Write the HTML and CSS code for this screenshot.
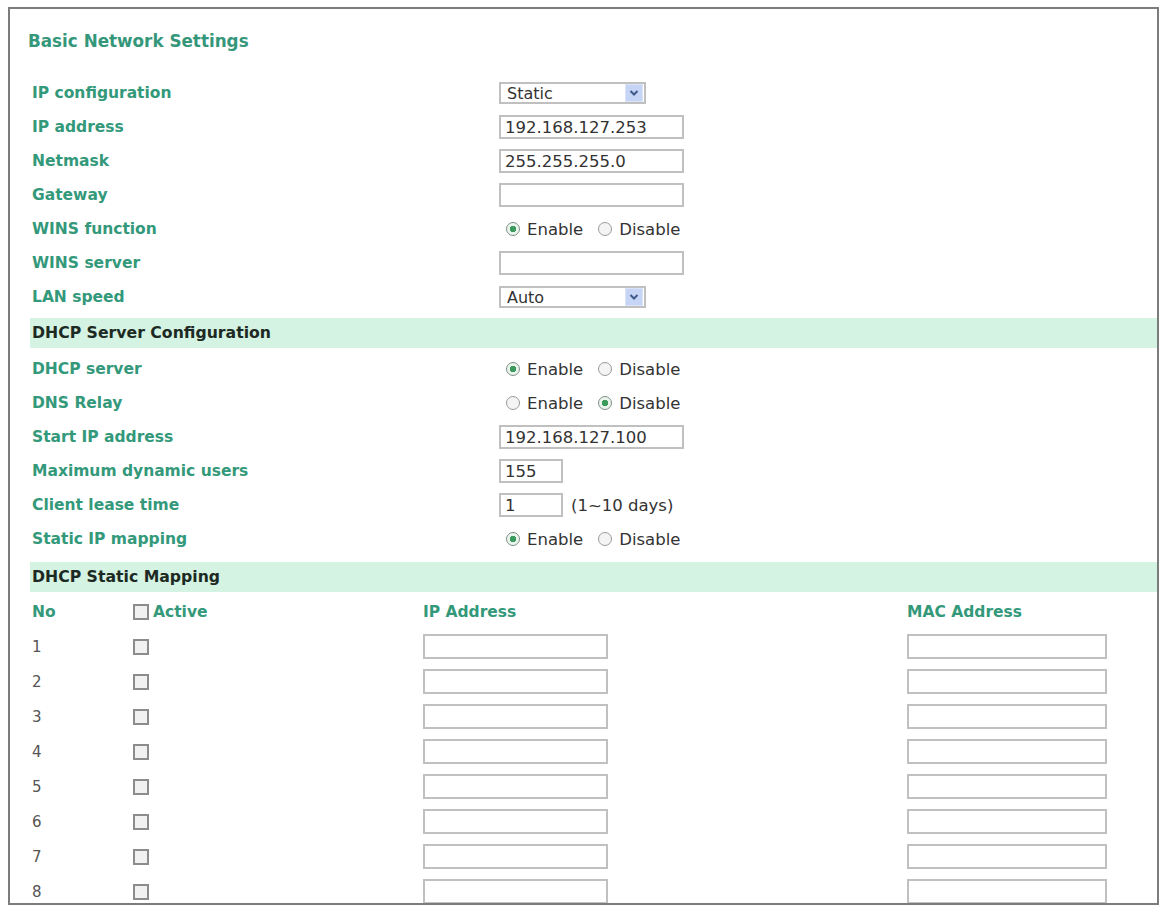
FILE: index.html
```html
<!DOCTYPE html>
<html lang="en">
<head>
    <meta charset="UTF-8">
    <title>Basic Network Settings</title>
    <link rel="stylesheet" href="styles.css">
</head>
<body>
    <div class="frame">
        <h1 class="title">Basic Network Settings</h1>

        <div class="form-grid">
            <div class="label">IP configuration</div>
            <div class="field">
                <div class="select">
                    <select><option>Static</option><option>DHCP</option></select>
                    <span class="arrow"><svg width="10" height="8" viewBox="0 0 10 8"><path d="M1.5 2 L5 5.5 L8.5 2" fill="none" stroke="#3f5a8a" stroke-width="2"/></svg></span>
                </div>
            </div>

            <div class="label">IP address</div>
            <div class="field"><input type="text" class="text-input" value="192.168.127.253"></div>

            <div class="label">Netmask</div>
            <div class="field"><input type="text" class="text-input" value="255.255.255.0"></div>

            <div class="label">Gateway</div>
            <div class="field"><input type="text" class="text-input" value=""></div>

            <div class="label">WINS function</div>
            <div class="field radios">
                <label><input type="radio" name="wins" checked>Enable</label>
                <label><input type="radio" name="wins">Disable</label>
            </div>

            <div class="label">WINS server</div>
            <div class="field"><input type="text" class="text-input" value=""></div>

            <div class="label">LAN speed</div>
            <div class="field">
                <div class="select">
                    <select><option>Auto</option><option>10M Half</option></select>
                    <span class="arrow"><svg width="10" height="8" viewBox="0 0 10 8"><path d="M1.5 2 L5 5.5 L8.5 2" fill="none" stroke="#3f5a8a" stroke-width="2"/></svg></span>
                </div>
            </div>
        </div>

        <div class="band">DHCP Server Configuration</div>

        <div class="form-grid dhcp-grid">
            <div class="label">DHCP server</div>
            <div class="field radios">
                <label><input type="radio" name="dhcp" checked>Enable</label>
                <label><input type="radio" name="dhcp">Disable</label>
            </div>

            <div class="label">DNS Relay</div>
            <div class="field radios">
                <label><input type="radio" name="dns">Enable</label>
                <label><input type="radio" name="dns" checked>Disable</label>
            </div>

            <div class="label">Start IP address</div>
            <div class="field"><input type="text" class="text-input" value="192.168.127.100"></div>

            <div class="label">Maximum dynamic users</div>
            <div class="field"><input type="text" class="text-input small" value="155"></div>

            <div class="label">Client lease time</div>
            <div class="field"><input type="text" class="text-input small" value="1"><span class="hint">(1~10 days)</span></div>

            <div class="label">Static IP mapping</div>
            <div class="field radios">
                <label><input type="radio" name="static" checked>Enable</label>
                <label><input type="radio" name="static">Disable</label>
            </div>
        </div>

        <div class="band band-mapping">DHCP Static Mapping</div>

        <div class="map">
            <div class="map-row map-head">
                <div class="col-no">No</div>
                <div class="col-active"><input type="checkbox" class="check">Active</div>
                <div class="col-ip">IP Address</div>
                <div class="col-mac">MAC Address</div>
            </div>
            <div class="map-row">
                <div class="col-no num">1</div>
                <div class="col-active"><input type="checkbox" class="check"></div>
                <div class="col-ip"><input type="text" class="text-input"></div>
                <div class="col-mac"><input type="text" class="text-input mac"></div>
            </div>
            <div class="map-row">
                <div class="col-no num">2</div>
                <div class="col-active"><input type="checkbox" class="check"></div>
                <div class="col-ip"><input type="text" class="text-input"></div>
                <div class="col-mac"><input type="text" class="text-input mac"></div>
            </div>
            <div class="map-row">
                <div class="col-no num">3</div>
                <div class="col-active"><input type="checkbox" class="check"></div>
                <div class="col-ip"><input type="text" class="text-input"></div>
                <div class="col-mac"><input type="text" class="text-input mac"></div>
            </div>
            <div class="map-row">
                <div class="col-no num">4</div>
                <div class="col-active"><input type="checkbox" class="check"></div>
                <div class="col-ip"><input type="text" class="text-input"></div>
                <div class="col-mac"><input type="text" class="text-input mac"></div>
            </div>
            <div class="map-row">
                <div class="col-no num">5</div>
                <div class="col-active"><input type="checkbox" class="check"></div>
                <div class="col-ip"><input type="text" class="text-input"></div>
                <div class="col-mac"><input type="text" class="text-input mac"></div>
            </div>
            <div class="map-row">
                <div class="col-no num">6</div>
                <div class="col-active"><input type="checkbox" class="check"></div>
                <div class="col-ip"><input type="text" class="text-input"></div>
                <div class="col-mac"><input type="text" class="text-input mac"></div>
            </div>
            <div class="map-row">
                <div class="col-no num">7</div>
                <div class="col-active"><input type="checkbox" class="check"></div>
                <div class="col-ip"><input type="text" class="text-input"></div>
                <div class="col-mac"><input type="text" class="text-input mac"></div>
            </div>
            <div class="map-row">
                <div class="col-no num">8</div>
                <div class="col-active"><input type="checkbox" class="check"></div>
                <div class="col-ip"><input type="text" class="text-input"></div>
                <div class="col-mac"><input type="text" class="text-input mac"></div>
            </div>
        </div>
    </div>
</body>
</html>
```

FILE: styles.css
```css
body {
    margin: 0;
    background-color: #ffffff;
    font-family: 'DejaVu Sans', Verdana, sans-serif;
    color: #333;
    overflow: hidden;
}

.frame {
    box-sizing: border-box;
    margin: 7px 0 0 8px;
    width: 1151px;
    height: 898px;
    border: 2px solid #7c7c7c;
    padding: 0 0 0 20px;
    overflow: hidden;
}

.title {
    margin: 22px 0 25px -2px;
    height: 20px;
    line-height: 20px;
    font-size: 16.8px;
    font-weight: bold;
    color: #35977a; /* green heading */
}

.form-grid {
    display: grid;
    grid-template-columns: 469px 1fr;
    grid-auto-rows: 34px;
    align-items: center;
}

.dhcp-grid {
    margin-top: 4px;
}

.label {
    padding-left: 2px;
    font-size: 15.5px;
    font-weight: bold;
    color: #33997a;
}

.field {
    display: flex;
    align-items: center;
    font-size: 16.5px;
    color: #333;
}

.text-input {
    box-sizing: border-box;
    width: 185px;
    height: 24px;
    margin: 0;
    padding: 0 4px;
    border: 2px solid #c0c0c0;
    font-family: 'DejaVu Sans', Verdana, sans-serif;
    font-size: 16.5px;
    color: #333;
    background: #fff;
    outline: none;
}

.text-input.small {
    width: 64px;
}

.text-input.mac {
    width: 200px;
}

.hint {
    margin-left: 8px;
}

.select {
    position: relative;
    width: 147px;
    height: 22px;
}

.select select {
    appearance: none;
    -webkit-appearance: none;
    box-sizing: border-box;
    width: 100%;
    height: 100%;
    margin: 0;
    padding: 0 0 0 6px;
    border: 2px solid #c0c0c0;
    border-radius: 0;
    background: #fff;
    font-family: 'DejaVu Sans', Verdana, sans-serif;
    font-size: 16px;
    color: #333;
    outline: none;
}

/* dropdown button drawn over the right end of the select */
.select .arrow {
    position: absolute;
    right: 3px;
    top: 2px;
    width: 18px;
    height: 18px;
    background: #c6d4f6;
    border: 1px solid #dbe3f9;
    box-sizing: border-box;
    display: flex;
    align-items: center;
    justify-content: center;
    pointer-events: none;
}

.radios label {
    display: inline-flex;
    align-items: center;
    gap: 7px;
    margin-right: 15px;
}

.radios label:first-child {
    margin-left: 7px;
}

input[type="radio"] {
    appearance: none;
    -webkit-appearance: none;
    box-sizing: border-box;
    width: 14px;
    height: 14px;
    margin: 0;
    border: 1.5px solid #9a9a9a;
    border-radius: 50%;
    background: #f4f4f4;
}

input[type="radio"]:checked {
    background: radial-gradient(circle, #3c9a5c 0 3px, #e9f5ec 3.5px);
    border-color: #7f8f86;
}

.band {
    margin-top: 4px;
    height: 30px;
    line-height: 30px;
    padding-left: 2px;
    background-color: #d4f3e2; /* light green section bar */
    font-size: 15.7px;
    font-weight: bold;
    color: #1d2a23;
}

.band-mapping {
    margin-top: 6px;
}

.map {
    margin-top: 2px;
}

.map-row {
    display: flex;
    align-items: center;
    height: 35px;
}

.col-no {
    width: 100px;
    padding-left: 2px;
}

.col-active {
    width: 291px;
    display: flex;
    align-items: center;
}

.col-ip {
    width: 484px;
}

.map-head {
    font-size: 15.5px;
    font-weight: bold;
    color: #33997a;
}

.map-head .col-active {
    gap: 4px;
}

.num {
    font-size: 15px;
    color: #555;
}

.check {
    appearance: none;
    -webkit-appearance: none;
    box-sizing: border-box;
    width: 16px;
    height: 16px;
    margin: 0 0 0 1px;
    border: 2px solid #8c8c8c;
    background: #f1f1f1;
}

.map-row .text-input {
    height: 25px;
}
```
